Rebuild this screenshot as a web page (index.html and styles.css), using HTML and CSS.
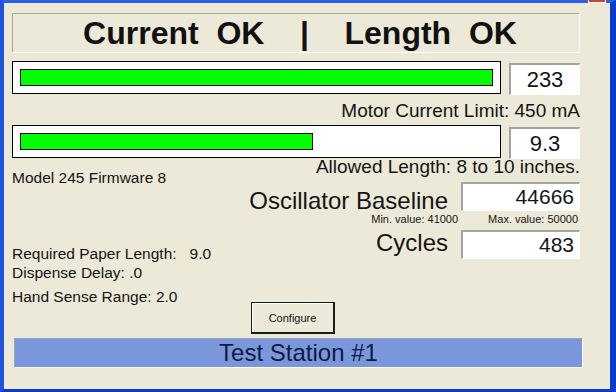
FILE: index.html
```html
<!DOCTYPE html>
<html lang="en">
<head>
    <meta charset="UTF-8">
    <title>Test Station</title>
    <link rel="stylesheet" href="styles.css">
</head>
<body>
    <div class="window">
        <span class="close-tab"></span>

        <div class="status">Current  OK    |    Length  OK</div>

        <div class="meter-row">
            <div class="meter"><div class="meter-fill" style="width: 100%;"></div></div>
            <div class="readout">233</div>
        </div>
        <p class="note limit">Motor Current Limit: 450 mA</p>

        <div class="meter-row second">
            <div class="meter"><div class="meter-fill" style="width: 62%;"></div></div>
            <div class="readout">9.3</div>
        </div>

        <div class="middle">
            <div class="info">
                <p class="model">Model 245 Firmware 8</p>
                <p class="setting paper">Required Paper Length:   9.0</p>
                <p class="setting">Dispense Delay: .0</p>
                <p class="setting hand">Hand Sense Range: 2.0</p>
            </div>

            <div class="tuning">
                <p class="note allowed">Allowed Length: 8 to 10 inches.</p>
                <div class="field osc">
                    <span class="field-label">Oscillator Baseline</span>
                    <span class="field-box">44666</span>
                </div>
                <div class="range">
                    <span>Min. value: 41000</span>
                    <span class="max">Max. value: 50000</span>
                </div>
                <div class="field cycles">
                    <span class="field-label">Cycles</span>
                    <span class="field-box">483</span>
                </div>
            </div>
        </div>

        <div class="actions">
            <button class="btn">Configure</button>
        </div>

        <div class="station">Test Station #1</div>
    </div>
</body>
</html>
```

FILE: styles.css
```css
* {
    margin: 0;
    padding: 0;
    box-sizing: border-box;
    font-family: "Liberation Sans", Arial, sans-serif;
}

body {
    background: #ece9d8;
}

.window {
    position: relative;
    width: 616px;
    height: 392px;
    background: #ece9d8;
    border-style: solid;
    border-width: 3px 6px 3px 4px;
    border-color: #2a5fe6 #0a3bc9 #0a3bc9 #1e52df;
    padding: 10px 30px 0 8px;
    color: #141414;
}

.close-tab {
    position: absolute;
    top: -3px;
    right: 4px;
    width: 18px;
    height: 3px;
    background: #c8452a;
    border: 1px solid #fff;
    border-top: 0;
}

.status {
    height: 40px;
    padding-left: 8px;
    display: flex;
    align-items: center;
    justify-content: center;
    border: 1px solid;
    border-color: #aca899 #fff #fff #aca899;
    font-size: 32px;
    font-weight: bold;
    white-space: pre;
    color: #111;
}

.meter-row {
    display: flex;
    align-items: flex-start;
    gap: 8px;
    margin-top: 8px;
}

.meter-row.second {
    margin-top: 3px;
}

.meter {
    width: 489px;
    height: 33px;
    padding: 7px;
    background: #fff;
    border: 1px solid #000;
}

.meter-fill {
    height: 17px;
    background: #00ff00;
    border: 1px solid #000;
}

.readout {
    width: 71px;
    height: 32px;
    margin-top: 2px;
    display: flex;
    align-items: center;
    justify-content: center;
    background: #fff;
    border-style: solid;
    border-width: 2px 1px 1px 2px;
    border-color: #a5a49c #fff #fff #a5a49c;
    font-size: 22px;
}

.note {
    text-align: right;
    font-size: 19px;
    line-height: 22px;
}

.limit {
    margin-top: 5px;
}

.middle {
    display: flex;
    justify-content: space-between;
    align-items: flex-start;
}

.info {
    padding-top: 10px;
    font-size: 15.5px;
}

.model {
    line-height: 18px;
}

.setting {
    line-height: 19px;
    white-space: pre;
}

.setting.paper {
    margin-top: 57px;
}

.setting.hand {
    margin-top: 5px;
    margin-bottom: -4px;
}

.tuning {
    display: flex;
    flex-direction: column;
    align-items: flex-end;
}

.allowed {
    margin-top: -1px;
    line-height: 18px;
}

.field {
    display: flex;
    align-items: flex-end;
    gap: 13px;
}

.field.osc {
    margin-top: 6px;
}

.field.cycles {
    margin-top: 5px;
    align-items: center;
}

.field-label {
    font-size: 24px;
    line-height: 16px;
}

.osc .field-label {
    margin-bottom: 2px;
}

.cycles .field-label {
    margin-bottom: 3px;
}

.field-box {
    width: 119px;
    height: 29px;
    padding-right: 5px;
    display: flex;
    align-items: center;
    justify-content: flex-end;
    background: #fff;
    border-style: solid;
    border-width: 2px 1px 1px 2px;
    border-color: #a5a49c #fff #fff #a5a49c;
    font-size: 21px;
}

.range {
    display: flex;
    justify-content: flex-end;
    margin-top: 3px;
    padding-right: 2px;
    font-size: 11px;
    line-height: 11px;
}

.range .max {
    margin-left: 30px;
}

.actions {
    display: flex;
    padding-left: 239px;
}

.btn {
    width: 84px;
    height: 32px;
    background: #ece9d8;
    border: 1px solid #1a1a1a;
    border-right-width: 2px;
    border-bottom-width: 2px;
    box-shadow: inset 1px 1px 0 #fff;
    font-size: 11px;
    color: #111;
}

.station {
    height: 30px;
    margin: 4px -3px 0 2px;
    display: flex;
    align-items: center;
    justify-content: center;
    background: #7b97dc;
    border: 1px solid;
    border-color: #9aa3b8 #fff #fff #9aa3b8;
    font-size: 24px;
    color: #0c1a45;
}
```
